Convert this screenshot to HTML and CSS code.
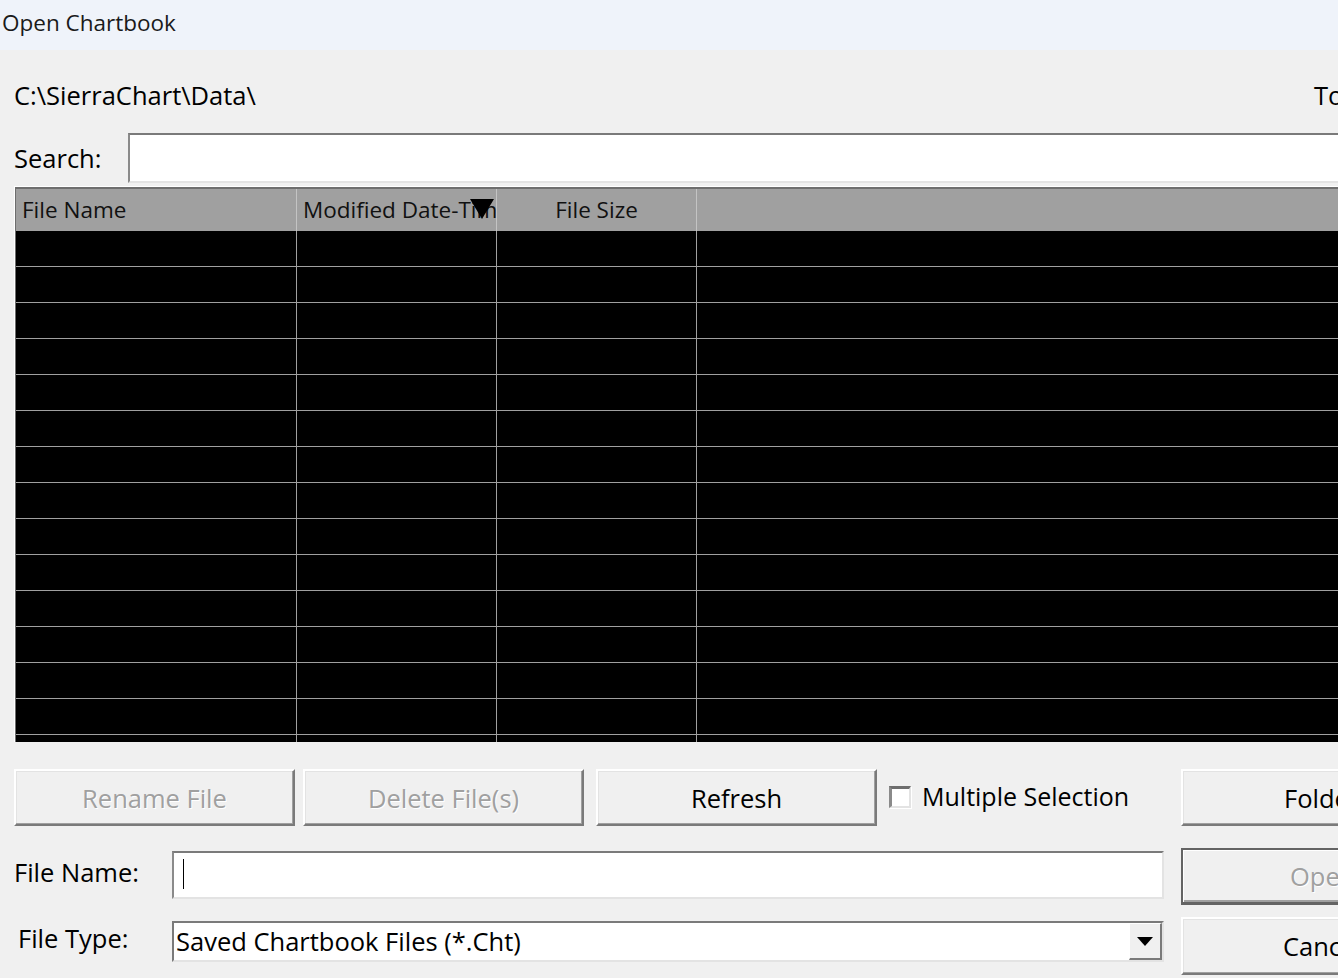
FILE: index.html
```html
<!DOCTYPE html>
<html>
<head>
<meta charset="utf-8">
<title>Open Chartbook</title>
<link rel="stylesheet" href="styles.css">
</head>
<body>
<div class="titlebar">Open Chartbook</div>
<div class="dialog">
  <div class="pathrow">
    <div class="path">C:\SierraChart\Data\</div>
    <div class="total">Total Files: 0</div>
  </div>
  <div class="searchrow">
    <div class="label search-label">Search:</div>
    <div class="field search-field"></div>
  </div>
  <div class="list">
    <div class="list-head">
      <div class="col c1 head-cell">File Name</div>
      <div class="col c2 head-cell">Modified Date-Time<span class="sort-arrow"></span></div>
      <div class="col c3 head-cell centered">File Size</div>
      <div class="col c4 head-cell"></div>
    </div>
    <div class="list-body">
      <div class="row"><div class="col c1"></div><div class="col c2"></div><div class="col c3"></div><div class="col c4"></div></div>
      <div class="row"><div class="col c1"></div><div class="col c2"></div><div class="col c3"></div><div class="col c4"></div></div>
      <div class="row"><div class="col c1"></div><div class="col c2"></div><div class="col c3"></div><div class="col c4"></div></div>
      <div class="row"><div class="col c1"></div><div class="col c2"></div><div class="col c3"></div><div class="col c4"></div></div>
      <div class="row"><div class="col c1"></div><div class="col c2"></div><div class="col c3"></div><div class="col c4"></div></div>
      <div class="row"><div class="col c1"></div><div class="col c2"></div><div class="col c3"></div><div class="col c4"></div></div>
      <div class="row"><div class="col c1"></div><div class="col c2"></div><div class="col c3"></div><div class="col c4"></div></div>
      <div class="row"><div class="col c1"></div><div class="col c2"></div><div class="col c3"></div><div class="col c4"></div></div>
      <div class="row"><div class="col c1"></div><div class="col c2"></div><div class="col c3"></div><div class="col c4"></div></div>
      <div class="row"><div class="col c1"></div><div class="col c2"></div><div class="col c3"></div><div class="col c4"></div></div>
      <div class="row"><div class="col c1"></div><div class="col c2"></div><div class="col c3"></div><div class="col c4"></div></div>
      <div class="row"><div class="col c1"></div><div class="col c2"></div><div class="col c3"></div><div class="col c4"></div></div>
      <div class="row"><div class="col c1"></div><div class="col c2"></div><div class="col c3"></div><div class="col c4"></div></div>
      <div class="row"><div class="col c1"></div><div class="col c2"></div><div class="col c3"></div><div class="col c4"></div></div>
      <div class="row"><div class="col c1"></div><div class="col c2"></div><div class="col c3"></div><div class="col c4"></div></div>
    </div>
  </div>
  <div class="actions">
    <div class="btn disabled w-small">Rename File</div>
    <div class="btn disabled w-small delete">Delete File(s)</div>
    <div class="btn w-small refresh">Refresh</div>
    <div class="check">
      <span class="box"></span>
      <span class="check-label">Multiple Selection</span>
    </div>
    <div class="btn side folder">Folder...</div>
  </div>
  <div class="form">
    <div class="label fn-label">File Name:</div>
    <div class="field fn-field"><span class="caret"></span></div>
    <div class="btn side default disabled">Open</div>
    <div class="label ft-label">File Type:</div>
    <div class="field ft-field">
      <span class="ft-text">Saved Chartbook Files (*.Cht)</span>
      <span class="drop"><span class="drop-arrow"></span></span>
    </div>
    <div class="btn side cancel">Cancel</div>
  </div>
</div>
</body>
</html>
```

FILE: styles.css
```css
html, body {
  margin: 0;
  padding: 0;
  background: #f0f0f0;
  overflow: hidden;
  width: 1338px;
  height: 978px;
}

body {
  font-family: "Open Sans", "Noto Sans", "Liberation Sans", sans-serif;
  color: #000;
}

.titlebar {
  height: 50px;
  background: #eff3fa;
  font-size: 22.5px;
  line-height: 46px;
  padding-left: 2px;
  color: #1a1a1a;
}

.dialog {
  width: 1480px;
  padding-left: 14px;
}

.pathrow {
  display: grid;
  grid-template-columns: 1300px auto;
  height: 83px;
  align-items: center;
  font-size: 25.5px;
}

.path {
  padding-top: 6px;
}

.total {
  padding-top: 6px;
  white-space: nowrap;
}

.label {
  font-size: 25.5px;
}

.searchrow {
  display: flex;
  align-items: center;
  height: 50px;
}

.search-label {
  width: 114px;
  padding-bottom: 1px;
}

.field {
  background: #fff;
  border-top: 2px solid #7a7a7a;
  border-left: 2px solid #8a8a8a;
  border-bottom: 2px solid #e3e3e3;
  border-right: 2px solid #e3e3e3;
  box-sizing: border-box;
}

.search-field {
  flex: 1;
  height: 50px;
}

/* file list */
.list {
  margin-top: 3px;
  height: 556px;
  border-top: 1px solid #ffffff;
  border-left: 1px solid #ffffff;
  box-sizing: border-box;
  overflow: hidden;
}

.list-head {
  display: flex;
  height: 44px;
  background: #a0a0a0;
  border-top: 2px solid #6e6e6e;
  border-left: 1px solid #6e6e6e;
  box-sizing: border-box;
}

.list-body {
  background: #000;
  border-left: 1px solid #6e6e6e;
}

.col {
  box-sizing: border-box;
  border-right: 1px solid #a8a8a8;
  flex: none;
}

.c1 { width: 281px; }
.c2 { width: 200px; }
.c3 { width: 200px; }
.c4 { flex: 1; border-right: none; }

.head-cell {
  font-size: 22.5px;
  line-height: 42px;
  padding-left: 6px;
  color: #111;
  white-space: nowrap;
  overflow: hidden;
  position: relative;
  border-right-color: #c4c4c4;
}

.centered {
  text-align: center;
  padding-left: 0;
}

.sort-arrow {
  position: absolute;
  left: 173px;
  top: 10px;
  width: 0;
  height: 0;
  border-left: 12px solid transparent;
  border-right: 12px solid transparent;
  border-top: 20px solid #000;
}

.row {
  display: flex;
  height: 36px;
  border-bottom: 1px solid #a0a0a0;
  box-sizing: border-box;
}

.row .col {
  border-right-color: #a0a0a0;
}

/* buttons */
.btn {
  box-sizing: border-box;
  height: 57px;
  background: #f0f0f0;
  border-top: 2px solid #ffffff;
  border-left: 2px solid #ffffff;
  border-right: 2px solid #7a7a7a;
  border-bottom: 2px solid #7a7a7a;
  box-shadow: inset -1px -1px 0 #a0a0a0, inset 1px 1px 0 #e3e3e3;
  display: flex;
  align-items: center;
  justify-content: center;
  font-size: 25.5px;
  white-space: nowrap;
  overflow: hidden;
}

.btn.disabled {
  color: #a0a0a0;
  text-shadow: 1px 1px 0 #ffffff;
}

.w-small {
  width: 281px;
}

.actions {
  display: flex;
  align-items: center;
  margin-top: 27px;
  height: 57px;
}

.actions .delete {
  margin-left: 8px;
}

.actions .refresh {
  margin-left: 12px;
}

.check {
  display: flex;
  align-items: center;
  margin-left: 12px;
  width: 292px;
}

.box {
  width: 22px;
  height: 22px;
  box-sizing: border-box;
  background: #fff;
  border-top: 3px solid #6e6e6e;
  border-left: 3px solid #8a8a8a;
  border-bottom: 2px solid #e3e3e3;
  border-right: 2px solid #e3e3e3;
  box-shadow: 1px 1px 0 #ffffff;
  margin-top: -2px;
}

.check-label {
  font-size: 25px;
  margin-left: 11px;
  padding-bottom: 4px;
}

.side {
  width: 220px;
  justify-content: flex-start;
  padding-left: 100px;
}

.folder {
  padding-left: 101px;
}

.form {
  display: grid;
  grid-template-columns: 141px 992px 220px;
  column-gap: 17px;
  align-items: start;
  margin-top: 22px;
}

.form .label {
  display: flex;
  align-items: center;
  padding-bottom: 13px;
  box-sizing: border-box;
}

.fn-label {
  height: 54px;
  margin-top: 3px;
}

.fn-field {
  height: 48px;
  position: relative;
  margin-top: 3px;
}

.caret {
  position: absolute;
  left: 9px;
  top: 6px;
  width: 1px;
  height: 30px;
  background: #000;
}

.default {
  height: 57px;
  border: 2px solid #646464;
  border-bottom-width: 3px;
  box-shadow: inset 1px 1px 0 #ffffff, inset -1px -2px 0 #a0a0a0;
  padding-left: 107px;
}

.ft-label {
  padding-left: 4px;
  height: 47px;
  margin-top: 16px;
}

.ft-field {
  height: 41px;
  margin-top: 16px;
  display: flex;
  align-items: center;
  border-left-color: #7a7a7a;
}

.ft-text {
  flex: 1;
  font-size: 25.5px;
  padding-left: 2px;
  padding-bottom: 2px;
  white-space: nowrap;
}

.drop {
  width: 33px;
  height: 37px;
  box-sizing: border-box;
  background: #f0f0f0;
  border-top: 1px solid #ffffff;
  border-left: 1px solid #ffffff;
  border-right: 2px solid #7a7a7a;
  border-bottom: 2px solid #7a7a7a;
  display: flex;
  align-items: center;
  justify-content: center;
}

.drop-arrow {
  width: 0;
  height: 0;
  border-left: 8px solid transparent;
  border-right: 8px solid transparent;
  border-top: 9px solid #000;
}

.cancel {
  margin-top: 12px;
  height: 58px;
}
```
